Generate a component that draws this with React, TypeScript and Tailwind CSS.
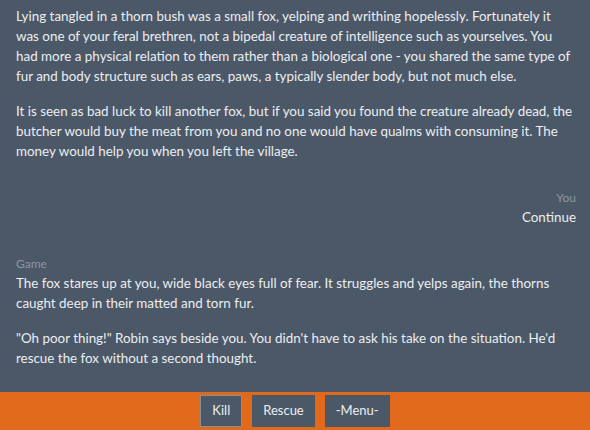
import React from "react";

const Entry = ({ who, paras, right }: { who?: string; paras: string[]; right?: boolean }) => (
  <div className={`pl-4 pr-[14px] pt-3 pb-4 bg-[#4b5868] ${right ? "text-right" : "text-left"}`}>
    {who && <div className="text-[12px] leading-[18px] text-[#8d97a2]">{who}</div>}
    {paras.map((p, i) => (
      <p key={i} className={`text-[13.4px] leading-[20px] text-[#eceef1] ${i > 0 ? "mt-[15px]" : ""}`}>
        {p}
      </p>
    ))}
  </div>
);

export default function App() {
  return (
    <div className="w-[590px] h-[430px] flex flex-col bg-[#4b5868] font-['Lato','Liberation_Sans',sans-serif] overflow-hidden">
      {/* log, scrolled to bottom */}
      <div className="flex-1 min-h-0 flex flex-col justify-end overflow-hidden pb-2">
        <Entry
          paras={[
            "Lying tangled in a thorn bush was a small fox, yelping and writhing hopelessly. Fortunately it was one of your feral brethren, not a bipedal creature of intelligence such as yourselves. You had more a physical relation to them rather than a biological one - you shared the same type of fur and body structure such as ears, paws, a typically slender body, but not much else.",
            "It is seen as bad luck to kill another fox, but if you said you found the creature already dead, the butcher would buy the meat from you and no one would have qualms with consuming it. The money would help you when you left the village.",
          ]}
        />
        <div className="h-[2px] bg-[#3e4958]" />
        <Entry who="You" paras={["Continue"]} right />
        <div className="h-[2px] bg-[#3e4958]" />
        <Entry
          who="Game"
          paras={[
            "The fox stares up at you, wide black eyes full of fear. It struggles and yelps again, the thorns caught deep in their matted and torn fur.",
            "\"Oh poor thing!\" Robin says beside you. You didn't have to ask his take on the situation. He'd rescue the fox without a second thought.",
          ]}
        />
      </div>

      {/* choices */}
      <div className="h-[38px] shrink-0 bg-[#e0691b] flex items-start justify-center gap-[10px] pt-[3px]">
        {["Kill", "Rescue", "-Menu-"].map((c, i) => (
          <button
            key={c}
            className={`h-[32px] bg-[#4b5868] text-[13px] text-[#eceef0] border ${
              i === 0 ? "border-[#8a8f94] px-[11px]" : "border-[#4b5868] px-[10px]"
            }`}
          >
            {c}
          </button>
        ))}
      </div>
    </div>
  );
}
